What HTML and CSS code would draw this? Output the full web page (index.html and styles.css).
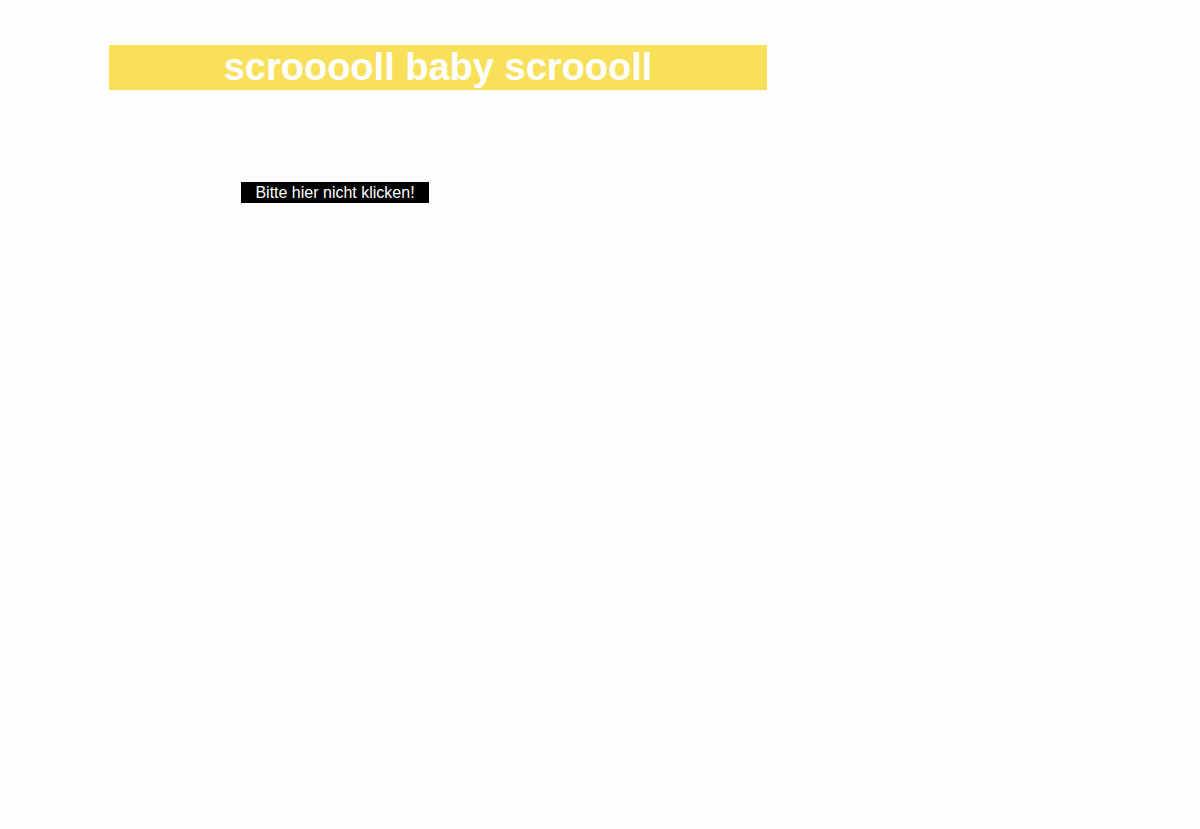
FILE: index.html
```html
<!DOCTYPE html>
<html>
<head>
<meta charset="utf-8">
<link rel="stylesheet" href="styles.css">
</head>
<body>
<div class="page">
  <h1 class="banner">scrooooll baby scroooll</h1>
  <button class="btn">Bitte hier nicht klicken!</button>
</div>
</body>
</html>
```
FILE: styles.css
```css
html, body {
  margin: 0;
  padding: 0;
  background: #fefefe;
  font-family: "Liberation Sans", Arial, sans-serif;
}
.page {
  display: flex;
  flex-direction: column;
  align-items: flex-start;
  padding: 45px 0 0 109px;
}
.banner {
  margin: 0;
  width: 658px;
  height: 45px;
  background: #f9e05b;
  color: #ffffff;
  font-size: 38px;
  font-weight: bold;
  line-height: 45px;
  text-align: center;
}
.btn {
  margin: 92px 0 0 132px;
  width: 188px;
  height: 21px;
  padding: 0;
  border: none;
  background: #000000;
  color: #ffffff;
  font-family: "Liberation Sans", Arial, sans-serif;
  font-size: 16px;
  line-height: 21px;
  text-align: center;
}
```
